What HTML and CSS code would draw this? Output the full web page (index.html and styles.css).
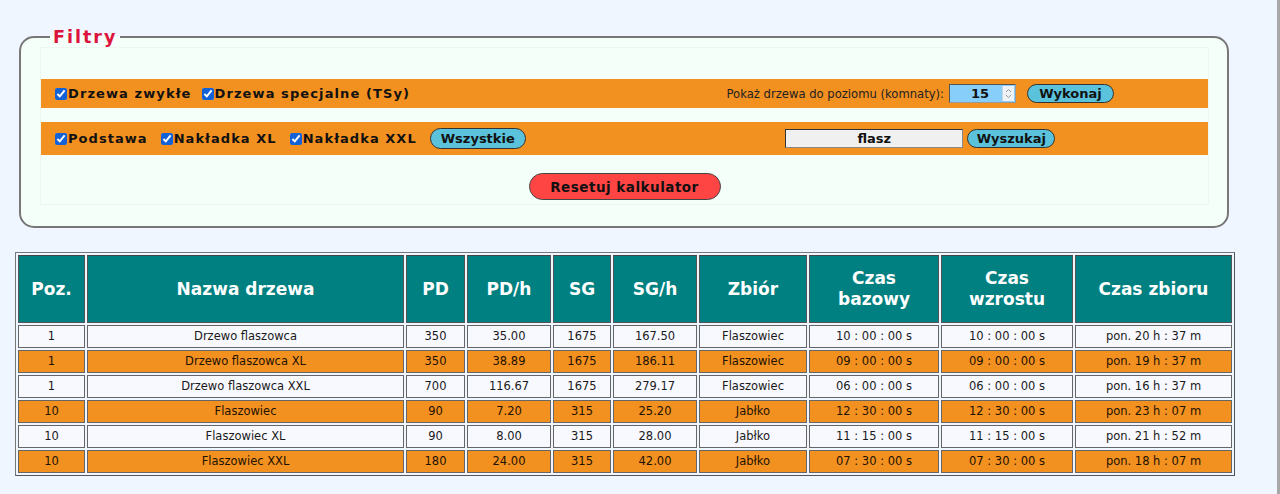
FILE: index.html
```html
<!DOCTYPE html>
<html lang="pl">
<head>
<meta charset="utf-8">
<title>Kalkulator drzew</title>
<link rel="stylesheet" href="styles.css">
</head>
<body>
<div class="page">
  <fieldset class="filters">
    <legend class="filters-title">Filtry</legend>
    <div class="filters-inner">
      <div class="bar bar-first">
        <div class="bar-left">
          <label class="chk"><input type="checkbox" checked>Drzewa zwykłe</label>
          <label class="chk"><input type="checkbox" checked>Drzewa specjalne (TSy)</label>
        </div>
        <div class="bar-right">
          <span class="lvl-label">Pokaż drzewa do poziomu (komnaty):</span>
          <span class="num-box"><input class="num-input" type="text" value="15"><span class="spin"><svg width="9" height="13" viewBox="0 0 9 13"><path d="M2 5 L4.5 2.5 L7 5" fill="none" stroke="#999" stroke-width="1"/><path d="M2 8 L4.5 10.5 L7 8" fill="none" stroke="#999" stroke-width="1"/></svg></span></span>
          <button class="btn btn-blue btn-exec">Wykonaj</button>
        </div>
      </div>
      <div class="bar bar-second">
        <div class="bar-left">
          <label class="chk chk-wide"><input type="checkbox" checked>Podstawa</label>
          <label class="chk chk-wide"><input type="checkbox" checked>Nakładka XL</label>
          <label class="chk chk-wide"><input type="checkbox" checked>Nakładka XXL</label>
          <button class="btn btn-blue btn-all">Wszystkie</button>
        </div>
        <div class="bar-right">
          <input class="search-input" type="text" value="flasz">
          <button class="btn btn-blue btn-search">Wyszukaj</button>
        </div>
      </div>
      <div class="reset-row">
        <button class="btn btn-red">Resetuj kalkulator</button>
      </div>
    </div>
  </fieldset>

  <table class="trees">
    <colgroup>
      <col class="c-poz"><col class="c-name"><col class="c-pd"><col class="c-pdh"><col class="c-sg"><col class="c-sgh"><col class="c-zb"><col class="c-t1"><col class="c-t2"><col class="c-t3">
    </colgroup>
    <thead>
      <tr>
        <th>Poz.</th><th>Nazwa drzewa</th><th>PD</th><th>PD/h</th><th>SG</th><th>SG/h</th><th>Zbiór</th><th>Czas bazowy</th><th>Czas wzrostu</th><th>Czas zbioru</th>
      </tr>
    </thead>
    <tbody>
      <tr class="r-light"><td>1</td><td>Drzewo flaszowca</td><td>350</td><td>35.00</td><td>1675</td><td>167.50</td><td>Flaszowiec</td><td>10 : 00 : 00 s</td><td>10 : 00 : 00 s</td><td>pon. 20 h : 37 m</td></tr>
      <tr class="r-orange"><td>1</td><td>Drzewo flaszowca XL</td><td>350</td><td>38.89</td><td>1675</td><td>186.11</td><td>Flaszowiec</td><td>09 : 00 : 00 s</td><td>09 : 00 : 00 s</td><td>pon. 19 h : 37 m</td></tr>
      <tr class="r-light"><td>1</td><td>Drzewo flaszowca XXL</td><td>700</td><td>116.67</td><td>1675</td><td>279.17</td><td>Flaszowiec</td><td>06 : 00 : 00 s</td><td>06 : 00 : 00 s</td><td>pon. 16 h : 37 m</td></tr>
      <tr class="r-orange"><td>10</td><td>Flaszowiec</td><td>90</td><td>7.20</td><td>315</td><td>25.20</td><td>Jabłko</td><td>12 : 30 : 00 s</td><td>12 : 30 : 00 s</td><td>pon. 23 h : 07 m</td></tr>
      <tr class="r-light"><td>10</td><td>Flaszowiec XL</td><td>90</td><td>8.00</td><td>315</td><td>28.00</td><td>Jabłko</td><td>11 : 15 : 00 s</td><td>11 : 15 : 00 s</td><td>pon. 21 h : 52 m</td></tr>
      <tr class="r-orange"><td>10</td><td>Flaszowiec XXL</td><td>180</td><td>24.00</td><td>315</td><td>42.00</td><td>Jabłko</td><td>07 : 30 : 00 s</td><td>07 : 30 : 00 s</td><td>pon. 18 h : 07 m</td></tr>
    </tbody>
  </table>
</div>
</body>
</html>
```

FILE: styles.css
```css
* { box-sizing: border-box; }

html, body {
  margin: 0;
  padding: 0;
  background: #f0f6ff;
}

body {
  font-family: "DejaVu Sans", Verdana, sans-serif;
  color: #111;
}

.page {
  width: 1280px;
  min-height: 494px;
  padding-top: 27px;
  border-right: 3px solid #a8a8a8;
}

.filters {
  margin: 0 48px 0 19px;
  border: 2px solid #777;
  border-radius: 15px;
  background: #f5fffa;
  padding: 0 18px 21px 19px;
  min-width: 0;
}

.filters-title {
  margin-left: 10px;
  padding: 0 3px;
  color: #dc143c;
  font-weight: bold;
  font-size: 17.5px;
  letter-spacing: 2px;
  line-height: 20px;
}

.filters-inner {
  border: 1px solid #eef6f2;
  padding: 31px 0 4px 0;
}

.bar {
  display: grid;
  grid-template-columns: 1fr 1fr;
  align-items: center;
  background: #f29020;
}

.bar-first { height: 29px; }
.bar-second { height: 33px; margin-top: 14px; }

.bar-left {
  display: flex;
  align-items: center;
  padding-left: 14px;
}

.bar-right {
  display: flex;
  align-items: center;
  justify-content: center;
  padding-left: 8px;
}

.chk {
  display: inline-flex;
  align-items: center;
  font-weight: bold;
  font-size: 13px;
  letter-spacing: 1.1px;
  color: #111;
  margin-right: 10px;
}

.chk-wide { margin-right: 13px; letter-spacing: 1.05px; }

.chk input {
  width: 12px;
  height: 12px;
  margin: 0 1px 0 0;
  accent-color: #1261d6;
}

.lvl-label {
  font-size: 11.6px;
  color: #222;
  margin-right: 5px;
}

.num-box {
  display: inline-flex;
  align-items: center;
  width: 67px;
  height: 19px;
  background: #87cefa;
  border: 1px solid #555;
  border-right-color: #999;
  border-bottom-color: #999;
  margin-right: 11px;
}

.num-input {
  width: 52px;
  height: 17px;
  border: 0;
  background: transparent;
  text-align: center;
  font-family: "DejaVu Sans", Verdana, sans-serif;
  font-weight: bold;
  font-size: 13px;
  padding: 0 0 0 8px;
  color: #111;
}

.spin {
  display: flex;
  align-items: center;
  justify-content: center;
  width: 12px;
  height: 15px;
  background: #eef3f8;
  border-left: 1px solid #c9d6e2;
}

.btn {
  font-family: "DejaVu Sans", Verdana, sans-serif;
  font-weight: bold;
  font-size: 13px;
  color: #111;
  border: 1px solid #333;
  border-radius: 12px;
  padding: 0;
  cursor: pointer;
}

.btn-blue { background: #5bc2dc; }

.btn-exec { width: 87px; height: 19px; }
.btn-all { width: 96px; height: 21px; margin-left: 0; }
.btn-search { width: 88px; height: 19px; margin-left: 4px; }

.search-input {
  width: 178px;
  height: 19px;
  background: #f0f0f0;
  border: 1px solid #333;
  border-right-color: #888;
  border-bottom-color: #888;
  text-align: center;
  font-family: "DejaVu Sans", Verdana, sans-serif;
  font-weight: bold;
  font-size: 13px;
  color: #111;
  padding: 0;
}

.reset-row {
  display: flex;
  justify-content: center;
  margin-top: 18px;
}

.btn-red {
  background: #ff4444;
  width: 192px;
  height: 27px;
  border-radius: 14px;
  font-size: 13.5px;
  letter-spacing: 0.5px;
  border-color: #444;
}

.trees {
  margin: 24px 0 0 15px;
  border: 1px solid #777;
  border-right-color: #555;
  border-bottom-color: #555;
  border-spacing: 2px;
  table-layout: fixed;
  width: 1219px;
  background: #f0f6ff;
}

.c-poz { width: 67px; }
.c-name { width: 317px; }
.c-pd { width: 59px; }
.c-pdh { width: 84px; }
.c-sg { width: 58px; }
.c-sgh { width: 84px; }
.c-zb { width: 108px; }
.c-t1 { width: 130px; }
.c-t2 { width: 132px; }
.c-t3 { width: 157px; }

.trees th {
  background: #008080;
  color: #fff;
  font-size: 17px;
  font-weight: bold;
  line-height: 21px;
  padding: 12px 6px 12px;
  border: 1px solid #555;
  border-top-color: #444;
  text-align: center;
}

.trees td {
  font-size: 11.5px;
  line-height: 15px;
  padding: 3px 2px;
  border: 1px solid #666;
  text-align: center;
  color: #1a1a1a;
}

.r-light td { background: #f8f8ff; }
.r-orange td { background: #f29020; color: #1e1200; }
```
